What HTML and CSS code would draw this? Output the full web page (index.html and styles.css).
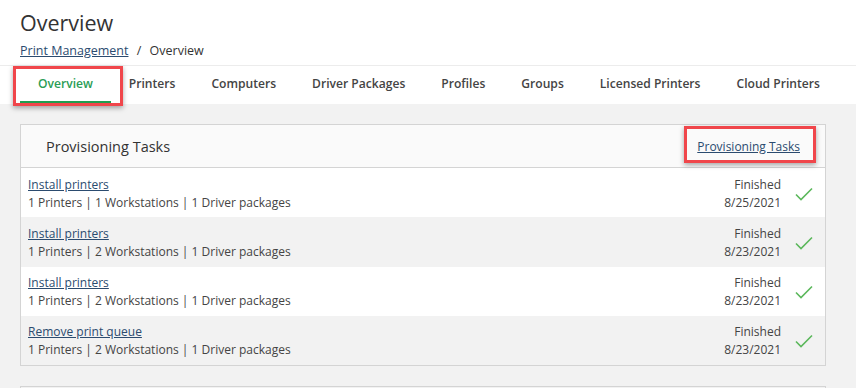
FILE: index.html
```html
<!DOCTYPE html>
<html lang="en">
<head>
  <meta charset="UTF-8" />
  <title>Overview - Print Management</title>
  <link rel="stylesheet" href="styles.css">
</head>
<body>
  <header class="page-head">
    <h1>Overview</h1>
    <div class="breadcrumb">
      <a href="#">Print Management</a>
      <span class="sep">/</span>
      <span>Overview</span>
    </div>
  </header>

  <nav class="tabs">
    <a class="tab active callout" href="#">Overview</a>
    <a class="tab" href="#">Printers</a>
    <a class="tab" href="#">Computers</a>
    <a class="tab" href="#">Driver Packages</a>
    <a class="tab" href="#">Profiles</a>
    <a class="tab" href="#">Groups</a>
    <a class="tab" href="#">Licensed Printers</a>
    <a class="tab" href="#">Cloud Printers</a>
  </nav>

  <main class="content">
    <section class="card">
      <div class="card-head">
        <h2>Provisioning Tasks</h2>
        <a class="head-link callout" href="#">Provisioning Tasks</a>
      </div>
      <div class="task">
        <div class="task-info">
          <a href="#">Install printers</a>
          <div>1 Printers | 1 Workstations | 1 Driver packages</div>
        </div>
        <div class="task-status">Finished<br>8/25/2021</div>
        <svg class="check" viewBox="0 0 18 14"><path d="M1 7.5l5 5L17 1.5" /></svg>
      </div>
      <div class="task">
        <div class="task-info">
          <a href="#">Install printers</a>
          <div>1 Printers | 2 Workstations | 1 Driver packages</div>
        </div>
        <div class="task-status">Finished<br>8/23/2021</div>
        <svg class="check" viewBox="0 0 18 14"><path d="M1 7.5l5 5L17 1.5" /></svg>
      </div>
      <div class="task">
        <div class="task-info">
          <a href="#">Install printers</a>
          <div>1 Printers | 2 Workstations | 1 Driver packages</div>
        </div>
        <div class="task-status">Finished<br>8/23/2021</div>
        <svg class="check" viewBox="0 0 18 14"><path d="M1 7.5l5 5L17 1.5" /></svg>
      </div>
      <div class="task">
        <div class="task-info">
          <a href="#">Remove print queue</a>
          <div>1 Printers | 2 Workstations | 1 Driver packages</div>
        </div>
        <div class="task-status">Finished<br>8/23/2021</div>
        <svg class="check" viewBox="0 0 18 14"><path d="M1 7.5l5 5L17 1.5" /></svg>
      </div>
    </section>
    <section class="card next"></section>
  </main>
</body>
</html>
```

FILE: styles.css
```css
:root {
  --green: #2a9d55;
  --link: #2b4b6f;
  --text: #444;
  --border: #d4d4d4;
  --bg-gray: #f2f2f2;
  --callout: #f0464b;
}
body {
  font-family: "Open Sans", "Noto Sans", sans-serif;
  color: var(--text);
  margin: 0;
  background: #fff;
  overflow: hidden;
}
a {
  color: var(--link);
}
.page-head {
  padding: 8px 20px 4px;
}
.page-head h1 {
  font-size: 21.5px;
  font-weight: 400;
  color: #333;
  margin: 0;
  line-height: 30px;
}
.breadcrumb {
  font-size: 12.5px;
  line-height: 20px;
  margin-top: 3px;
  color: #333;
}
.breadcrumb .sep {
  margin: 0 5px;
}
.tabs {
  display: flex;
  border-top: 1px solid #ececec;
  height: 38px;
  padding-left: 20px;
}
.tab {
  position: relative;
  padding: 0 18px;
  font-size: 12.1px;
  font-weight: 600;
  color: var(--text);
  text-decoration: none;
  line-height: 35px;
  border-bottom: 3px solid transparent;
}
.tab.active {
  color: var(--green);
  border-bottom-color: #1f9d4f;
}
.callout::after {
  content: "";
  position: absolute;
  border: 3px solid var(--callout);
  box-shadow: 0 2px 5px rgba(0,0,0,0.35);
  pointer-events: none;
}
.tab.callout::after {
  left: -7px;
  right: -12px;
  top: 0;
  bottom: -5px;
}
.content {
  background: var(--bg-gray);
  padding: 20px 30px 20px 20px;
}
.card {
  background: #fff;
  border: 1px solid var(--border);
}
.card.next {
  margin-top: 20px;
  height: 40px;
  background: var(--bg-gray);
}
.card-head {
  display: flex;
  align-items: center;
  justify-content: space-between;
  height: 42px;
  padding: 0 25px;
  background: #fafafa;
  border-bottom: 1px solid var(--border);
}
.card-head h2 {
  font-size: 14.5px;
  font-weight: 400;
  color: #333;
  margin: 0;
}
.head-link {
  position: relative;
  font-size: 12px;
}
.head-link.callout::after {
  left: -13px;
  right: -16px;
  top: -12px;
  bottom: -8px;
}
.task {
  display: flex;
  align-items: center;
  height: 49.25px;
  padding: 2px 12px 0 7px;
  box-sizing: border-box;
  font-size: 12px;
  line-height: 18px;
}
.task:nth-child(odd) {
  background: var(--bg-gray);
}
.task-info {
  flex: 1;
}
.task-status {
  text-align: right;
}
.check {
  width: 18px;
  height: 14px;
  margin-left: 14px;
  fill: none;
  stroke: #5cb85c;
  stroke-width: 1.6;
}
```
